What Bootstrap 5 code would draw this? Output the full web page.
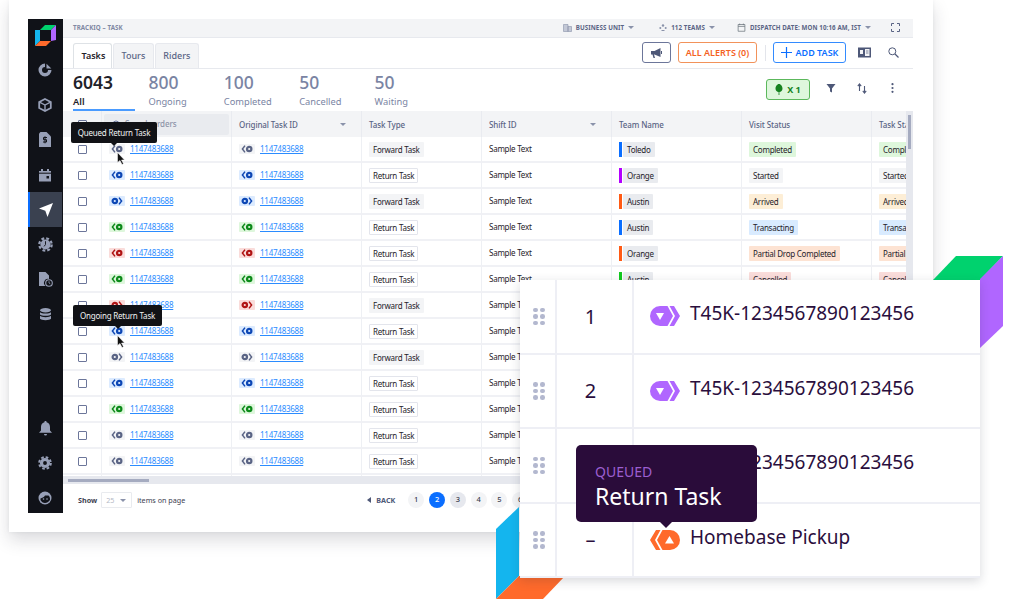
<!DOCTYPE html>
<html lang="en">
<head>
    <meta charset="UTF-8">
    <meta name="viewport" content="width=device-width, initial-scale=1.0">
    <title>TrackIQ - Task</title>
    <link href="https://cdn.jsdelivr.net/npm/bootstrap@5.3.0/dist/css/bootstrap.min.css" rel="stylesheet">
    <style>
        html, body { height: 609px; overflow: hidden; }
        body { background: #fff; font-family: "Noto Sans", sans-serif; color: #1f2229; position: relative; }
        /* app window */
        .app-frame { width: 924px; height: 532px; margin-left: 9px; padding: 19px 20px 19px 19px; background: #fff; box-shadow: 0 8px 16px rgba(40, 44, 60, .17), 0 0 4px rgba(40, 44, 60, .06); }
        .app-inner { height: 494px; }
        .side-rail { width: 35px; background: #101218; color: #979fb6; flex: none; }
        .rail-logo { height: 33px; }
        .rail-item { height: 35px; width: 34px; }
        .rail-item:last-child { margin-bottom: -2.5px; }
        .rail-item.active { background: #3a4150; border-left: 2px solid #0a6eff; color: #fff; }
        .app-main { width: 850px; min-width: 0; }
        .top-strip { height: 19px; background: #f3f4f6; border-bottom: 1px solid #e7e9ee; padding: 0 13px 0 10px; font-size: 6.2px; font-weight: 700; color: #5a6485; letter-spacing: .1px; }
        .crumb { color: #7f88a3; }
        .strip-gap { gap: 22px; }
        .strip-unit { margin-right: 3px; }
        .strip-full { margin-left: -2px; }
        .caret-d { display: inline-block; border-left: 3px solid transparent; border-right: 3px solid transparent; border-top: 3px solid #8a92aa; }
        .tab-row { height: 31px; border-bottom: 1px solid #e7e9ee; padding: 5px 14px 0 10px; }
        .tab-row .nav-tabs { border: 0; gap: 1px; font-size: 9px; }
        .tab-row .nav-link { height: 25px; padding: 5px 7.5px; background: #f3f4f6; color: #5a6485; border: 1px solid #e7e9ee; border-bottom: 0; border-radius: 3px 3px 0 0; font-weight: 500; margin: 0; }
        .tab-row .nav-link.active { background: #fff; color: #1f2229; font-weight: 600; width: 39px; }
        .act-btn { height: 21px; padding: 0 6px; font-size: 9px; font-weight: 600; line-height: 1; border-radius: 3px; background: #fff; --bs-btn-border-width: 1px; margin-top: -1px; }
        .btn-horn { width: 29px; border-color: #6c769a; color: #4e5878; padding: 0; margin-right: 7px; }
        .btn-alert { width: 79px; border-color: #f2925a; color: #f4621f; padding: 0; }
        .btn-add { width: 73px; border-color: #338bff; color: #0a6eff; padding: 0; }
        .act-divider { width: 1px; height: 16px; background: #e3e5eb; margin: 2px 7px 0 8px; }
        .book-ic { margin: 4px 0 0 12px; }
        .find-ic { margin: 4px 0 0 17px; }
        .stat-row { height: 42px; padding: 0 5px 0 10px; }
        .stat-cell { width: 75.4px; padding-top: 1px; color: #7a84a3; }
        .stat-num { font-size: 17.5px; font-weight: 500; line-height: 24px; }
        .stat-label { font-size: 9.3px; line-height: 13px; margin-top: 1px; }
        .stat-cell.active { color: #1f2229; }
        .stat-cell.active .stat-num, .stat-cell.active .stat-label { font-weight: 600; }
        .stat-bar { width: 62px; height: 2px; background: #4a9bff; margin-top: 1px; }
        .stat-tools { padding-top: 10px; }
        .btn-tree { width: 44px; height: 21px; margin-right: 5px; background: #def7dc; border: 1px solid #5cb85c; border-radius: 3px; color: #16821f; font-size: 9px; font-weight: 700; }
        .tool-btn { width: 31px; color: #4e5878; }
        /* table */
        .table-wrap { height: 365px; overflow: hidden; position: relative; }
        .task-table { table-layout: fixed; width: 939px; margin: 0; font-size: 8px; letter-spacing: -.25px; border-collapse: separate; border-spacing: 0; color: #1f2229; }
        .task-table th { height: 26px; background: #f3f4f6; color: #5a6485; font-size: 8px; font-weight: 500; letter-spacing: -.1px; padding: 1px 7px 0; border: 0; border-right: 1px solid #e9ebf0; vertical-align: middle; }
        .task-table td { height: 26px; padding: 0 7px; border: 0; border-right: 1px solid #eef0f4; border-bottom: 2px solid #f0f1f5; vertical-align: middle; white-space: nowrap; overflow: hidden; }
        .task-table .cell-search { padding: 2px; }
        .search-box { height: 21px; background: #e9ebef; border-radius: 2px; padding-left: 8px; color: #8d94a8; gap: 4px; }
        .box-check { width: 9px; height: 9px; border: 1px solid #6c769a; border-radius: 1px; display: block; margin: 0 auto; }
        .type-tag, .team-tag, .stat-tag { display: inline-block; height: 15px; line-height: 15px; padding: 0 4px; border-radius: 1px; }
        .type-forward { background: #f3f4f6; }
        .type-return { background: #fff; outline: 1px solid #e3e5ec; outline-offset: -1px; }
        .team-wrap { display: flex; align-items: center; gap: 1px; }
        .team-bar { width: 3px; height: 15px; }
        .team-tag { background: #e9ebef; }
        .s-green { background: #def7dc; } .s-grey { background: #f3f4f6; } .s-amber { background: #fdeed6; }
        .s-blue { background: #d9ebff; } .s-peach { background: #fde3d3; } .s-red { background: #fadcda; }
        .id-link { color: #2b8cff; text-decoration: underline; margin-left: 5px; }
        .id-badge { display: inline-flex; align-items: center; justify-content: center; width: 16px; height: 10px; border-radius: 1px; vertical-align: -2px; }
        .b-blue { background: #dcebff; color: #0d47b5; } .b-green { background: #def7dc; color: #0d8a1a; }
        .b-red { background: #fadcda; color: #b01414; } .b-grey { background: #f3f4f6; color: #5a6485; }
        .v-scroll { position: absolute; right: 0; top: 0; bottom: 0; width: 7.5px; background: #e6e8ee; }
        .v-thumb { width: 3px; height: 34px; margin: 4px 0 0 2.5px; background: #a5abc0; }
        .h-scroll { height: 8px; background: #e6e8ee; }
        .h-thumb { width: 81px; height: 3px; margin-left: 5px; background: #a5abc0; }
        /* footer */
        .pager-row { height: 29px; padding: 3px 0 0 15px; font-size: 7.2px; color: #3c4150; }
        .size-select { width: 31px; height: 16px; border: 1px solid #e9ebef; border-radius: 1px; margin: 0 5px 0 4px; padding: 0 5px 0 4px; color: #b5b9c6; }
        .back-link { margin-left: 182px; margin-right: 13px; color: #4e5878; font-weight: 700; font-size: 7.2px; gap: 5px; }
        .page-dot { width: 16px; height: 16px; margin-right: 4.8px; border-radius: 50%; background: #f3f4f6; font-size: 7.5px; font-weight: 500; color: #3c4150; }
        .page-dot.on { background: #0a6eff; color: #fff; }
        .page-dot.mid { background: #e6e8ee; }
        /* hover tips */
        .hover-tip { position: absolute; background: #111216; color: #f2f2f2; font-size: 8px; letter-spacing: -.2px; height: 21px; line-height: 21px; border-radius: 2px; text-align: center; z-index: 3; }
        .hover-tip::after { content: ""; position: absolute; left: 50%; bottom: -3px; margin-left: -3px; border-left: 3px solid transparent; border-right: 3px solid transparent; border-top: 3px solid #111216; }
        .tip-one { left: 71px; top: 122px; width: 86px; }
        .tip-two { left: 73px; top: 305px; width: 89px; }
        .cursor-mark { position: absolute; z-index: 4; width: 9px; height: 13px; }
        .cur-one { left: 117px; top: 152px; }
        .cur-two { left: 117px; top: 335px; }
        /* cube pieces + floating panel */
        .cube-art { position: absolute; left: 0; top: 0; z-index: 5; pointer-events: none; }
        .float-panel { position: absolute; left: 520px; top: 280px; width: 460px; background: #fff; z-index: 6; box-shadow: 0 3px 10px rgba(40, 44, 60, .18); color: #2a0e3d; }
        .panel-row { height: 74.5px; border-bottom: 2px solid #eeeff5; }
        .panel-grip { width: 37px; padding-left: 3px; border-right: 2px solid #eeeff5; }
        .grip-dots { display: grid; grid-template-columns: 4.5px 4.5px; gap: 2px 2.5px; }
        .grip-dots i { width: 4.5px; height: 4.5px; border-radius: 50%; background: #b3b8cf; }
        .panel-num { width: 77px; padding: 1px 8px 0 0; border-right: 2px solid #eeeff5; font-size: 20px; }
        .panel-body { padding-left: 16px; font-size: 19px; gap: 10px; }
        .panel-text { padding-bottom: 6px; }
        .dark-tip { position: absolute; left: 576px; top: 445px; width: 181px; height: 77px; background: #2a0c3a; border-radius: 5px; z-index: 7; padding: 17px 19px; color: #fff; }
        .dark-tip::after { content: ""; position: absolute; left: 84px; bottom: -6px; border-left: 6px solid transparent; border-right: 6px solid transparent; border-top: 6px solid #2a0c3a; }
        .dark-kicker { color: #9c5fd0; font-size: 14px; line-height: 19px; }
        .dark-title { font-size: 23px; line-height: 31px; }
    </style>
</head>
<body>
    <svg width="0" height="0" class="position-absolute">
        <symbol id="ic-ret" viewBox="0 0 16 10"><path d="M6 1.600 3.400 5 6 8.400" fill="none" stroke="currentColor" stroke-width="1.500"/><circle cx="10.200" cy="5" r="2.200" fill="none" stroke="currentColor" stroke-width="2.200"/></symbol>
        <symbol id="ic-fwd" viewBox="0 0 16 10"><circle cx="5.800" cy="5" r="2.200" fill="none" stroke="currentColor" stroke-width="2.200"/><path d="M10 1.600 12.600 5 10 8.400" fill="none" stroke="currentColor" stroke-width="1.500"/></symbol>
        <symbol id="ic-gear" viewBox="0 0 16 16"><circle cx="8" cy="8" r="5.400" fill="currentColor"/><circle cx="8" cy="8" r="6.600" fill="none" stroke="currentColor" stroke-width="2.400" stroke-dasharray="3 2.180"/><path d="M8 4.500V8L6.500 10" fill="none" stroke="#101218" stroke-width="1"/></symbol>
        <symbol id="ic-big" viewBox="0 0 30 20"><path d="M10 0h7.500L23 10l-5.500 10H10a10 10 0 0 1 0-20z" fill="currentColor"/><path d="M19.500 0H24l6 10-6 10h-4.500l5.500-10z" fill="currentColor"/></symbol>
        <symbol id="ic-cal" viewBox="0 0 12 12"><path d="M1.500 2h9v9h-9zM1.500 4.500h9M3.500 .8v2M8.500 .8v2" fill="none" stroke="currentColor" stroke-width="1"/></symbol>
    </svg>

    <div class="app-frame">
        <div class="app-inner d-flex">
            <!-- left rail -->
            <div class="side-rail d-flex flex-column">
                <div class="rail-logo d-flex align-items-center justify-content-center">
                    <svg width="21" height="21" viewBox="0 0 21 21"><path d="M5 5 10 0h11l-5 5z" fill="#00d26e"/><path d="M16 5l5-5v15l-5 1z" fill="#b066ff"/><path d="M0 5h5v11l-5 5z" fill="#14b5ee"/><path d="M5 16h11l-5 5H0z" fill="#ff6a2b"/></svg>
                </div>
                <div class="rail-item d-flex align-items-center justify-content-center"><svg width="14" height="14" viewBox="0 0 14 14"><path d="M7 .5a6.500 6.500 0 1 0 6.500 6.500H10a3 3 0 1 1-3-3z" fill="currentColor"/><path d="M8.500 .7 13.300 5.500H8.500z" fill="currentColor"/></svg></div>
                <div class="rail-item d-flex align-items-center justify-content-center"><svg width="14" height="14" viewBox="0 0 14 14"><path d="M7 1 12.800 4v6L7 13 1.200 10V4z" fill="none" stroke="currentColor" stroke-width="1.800"/><path d="M1.500 4.200 7 7l5.500-2.800M7 7v6" fill="none" stroke="currentColor" stroke-width="1.400"/></svg></div>
                <div class="rail-item d-flex align-items-center justify-content-center"><svg width="12" height="15" viewBox="0 0 12 15"><path d="M0 1.500 1.500 0h6L12 4.500V15H0z" fill="currentColor"/><path d="M8 5.500H4.500v2.200h3v2.300H4M6 4.300v7" fill="none" stroke="#101218" stroke-width="1"/></svg></div>
                <div class="rail-item d-flex align-items-center justify-content-center"><svg width="14" height="14" viewBox="0 0 14 14"><path d="M1 3h12v10.500H1z" fill="currentColor"/><path d="M3 1h2v2H3zM9 1h2v2H9z" fill="currentColor"/><path d="M1 5.200h12" stroke="#101218"/><rect x="8.500" y="8" width="2.500" height="2.500" fill="#101218"/></svg></div>
                <div class="rail-item active d-flex align-items-center justify-content-center"><svg width="14" height="14" viewBox="0 0 14 14"><path d="M14 0 8.500 14 6.300 7.700 0 5.500z" fill="currentColor"/></svg></div>
                <div class="rail-item d-flex align-items-center justify-content-center"><svg width="15" height="15"><use href="#ic-gear"/></svg></div>
                <div class="rail-item d-flex align-items-center justify-content-center"><svg width="15" height="15" viewBox="0 0 15 15"><path d="M1 0h6.500L11 3.500V7a4 4 0 0 0-3.500 7H1z" fill="currentColor"/><circle cx="11" cy="11" r="3.300" fill="none" stroke="currentColor" stroke-width="1.100"/><path d="M11 9.200V11l1.300.8" fill="none" stroke="currentColor" stroke-width=".8"/></svg></div>
                <div class="rail-item d-flex align-items-center justify-content-center"><svg width="13" height="13" viewBox="0 0 13 13"><ellipse cx="6.500" cy="2.200" rx="5.500" ry="2.200" fill="currentColor"/><path d="M1 4.200c1 1.800 10 1.800 11 0v2.300c-1 1.800-10 1.800-11 0zM1 7.800c1 1.800 10 1.800 11 0v2.900c-1 1.900-10 1.900-11 0z" fill="currentColor"/></svg></div>
                <div class="flex-grow-1"></div>
                <div class="rail-item d-flex align-items-center justify-content-center"><svg width="13" height="15" viewBox="0 0 13 15"><path d="M6.500 0c.8 0 1.100.5 1.100 1.200C10 1.800 11 3.700 11 6v3.500l2 2.300H0l2-2.300V6c0-2.300 1-4.200 3.400-4.800C5.400.5 5.700 0 6.500 0zM5 13h3a1.500 1.500 0 0 1-3 0z" fill="currentColor"/></svg></div>
                <div class="rail-item d-flex align-items-center justify-content-center"><svg width="14" height="14" viewBox="0 0 16 16"><path d="M8 4a4 4 0 1 0 0 8 4 4 0 0 0 0-8z" fill="none" stroke="currentColor" stroke-width="3.600"/><circle cx="8" cy="8" r="6.600" fill="none" stroke="currentColor" stroke-width="2.400" stroke-dasharray="3 2.180"/></svg></div>
                <div class="rail-item d-flex align-items-center justify-content-center"><svg width="14" height="14" viewBox="0 0 14 14"><circle cx="7" cy="7" r="6.500" fill="currentColor"/><path d="M2.500 9V7.500C4 7 6 6.500 7 4.500h3.500c1 .8 1.500 2 1.500 3.500v1c-1.500 2-3 3-5 3s-3.500-1-4.500-3z" fill="#101218"/><circle cx="5.500" cy="8" r=".8" fill="currentColor"/><circle cx="9" cy="8" r=".8" fill="currentColor"/></svg></div>
            </div>

            <!-- main column -->
            <div class="app-main d-flex flex-column">
                <div class="top-strip d-flex align-items-center justify-content-between">
                    <span class="crumb">TRACKIQ – TASK</span>
                    <div class="d-flex align-items-center strip-gap">
                        <span class="strip-unit d-flex align-items-center gap-1"><svg width="9" height="8" viewBox="0 0 9 8"><path d="M.5.500h4.500v7H.5zM5 2.500h3.500v5H5z" fill="#c3c8d6" stroke="#8a92aa" stroke-width=".6"/></svg>BUSINESS UNIT <i class="caret-d"></i></span>
                        <span class="d-flex align-items-center gap-1"><svg width="8" height="7" viewBox="0 0 8 7"><circle cx="4" cy="1.500" r="1.200" fill="#8a92aa"/><circle cx="1.300" cy="4" r="1" fill="#8a92aa"/><circle cx="6.700" cy="4" r="1" fill="#8a92aa"/><path d="M2.500 6.500h3" stroke="#8a92aa"/></svg>112 TEAMS <i class="caret-d"></i></span>
                        <span class="d-flex align-items-center gap-1"><svg width="9" height="9" class="text-secondary"><use href="#ic-cal"/></svg>DISPATCH DATE: MON 10:16 AM, IST <i class="caret-d"></i></span>
                        <svg class="strip-full" width="9" height="9" viewBox="0 0 9 9"><path d="M.5 3V.5H3M6 .5h2.500V3M8.500 6v2.500H6M3 8.500H.5V6" fill="none" stroke="#5a6485" stroke-width="1"/></svg>
                    </div>
                </div>

                <div class="tab-row d-flex justify-content-between">
                    <ul class="nav nav-tabs">
                        <li class="nav-item"><a class="nav-link active" href="#">Tasks</a></li>
                        <li class="nav-item"><a class="nav-link" href="#">Tours</a></li>
                        <li class="nav-item"><a class="nav-link" href="#">Riders</a></li>
                    </ul>
                    <div class="d-flex align-items-start">
                        <button class="btn act-btn btn-horn d-flex align-items-center justify-content-center"><svg width="11" height="10" viewBox="0 0 11 10"><path d="M0 3h3.500L9.500 0v9L3.500 6.500H3L4 10H2.500L1.500 6.500H0z" fill="currentColor"/><rect x="10" y="3" width="1" height="3" fill="currentColor"/></svg></button>
                        <button class="btn act-btn btn-alert">ALL ALERTS (0)</button>
                        <span class="act-divider"></span>
                        <button class="btn act-btn btn-add d-flex align-items-center justify-content-center gap-1"><svg width="11" height="11" viewBox="0 0 11 11"><path d="M5.500 0v11M0 5.500h11" stroke="currentColor" stroke-width="1.200"/></svg>ADD TASK</button>
                        <svg class="book-ic" width="13" height="11" viewBox="0 0 13 11"><rect width="13" height="10" y=".5" fill="#4e5878"/><rect x="7" y="2" width="4.500" height="7" fill="#f3f4f6"/><path d="M8 4h2.500M8 6h2.500" stroke="#4e5878" stroke-width=".7"/><rect x="2" y="3" width="3" height="4" fill="#f3f4f6"/></svg>
                        <svg class="find-ic" width="11" height="11" viewBox="0 0 11 11"><circle cx="4.300" cy="4.300" r="3.500" fill="none" stroke="#4e5878" stroke-width="1"/><path d="M7 7l3.500 3.500" stroke="#4e5878" stroke-width="1.300"/></svg>
                    </div>
                </div>

                <div class="stat-row d-flex justify-content-between">
                    <div class="d-flex">
                        <div class="stat-cell active"><div class="stat-num">6043</div><div class="stat-label">All</div><div class="stat-bar"></div></div>
                        <div class="stat-cell"><div class="stat-num">800</div><div class="stat-label">Ongoing</div></div>
                        <div class="stat-cell"><div class="stat-num">100</div><div class="stat-label">Completed</div></div>
                        <div class="stat-cell"><div class="stat-num">50</div><div class="stat-label">Cancelled</div></div>
                        <div class="stat-cell"><div class="stat-num">50</div><div class="stat-label">Waiting</div></div>
                    </div>
                    <div class="stat-tools d-flex align-items-start">
                        <div class="btn-tree d-flex align-items-center justify-content-center gap-1"><svg width="8" height="11" viewBox="0 0 8 11"><path d="M4 0c2 0 3.500 2.500 3.500 4.500S6 8 4.400 8v3h-.8V8C2 8 .5 6.500.5 4.500S2 0 4 0z" fill="#16821f"/></svg>X 1</div>
                        <div class="tool-btn d-flex justify-content-center pt-1"><svg width="10" height="10" viewBox="0 0 10 10"><path d="M.5 1h9L6 5.500V9.500L4 8.500V5.500z" fill="currentColor"/></svg></div>
                        <div class="tool-btn d-flex justify-content-center pt-1"><svg width="10" height="11" viewBox="0 0 10 11"><path d="M2.500 8V2M.8 3.200 2.500 1l1.700 2.200M7.500 3v6M5.800 7.800 7.500 10l1.700-2.200" fill="none" stroke="currentColor" stroke-width="1.100"/></svg></div>
                        <div class="tool-btn d-flex justify-content-center pt-1"><svg width="3" height="10" viewBox="0 0 3 10"><circle cx="1.500" cy="1.200" r="1.100" fill="currentColor"/><circle cx="1.500" cy="5" r="1.100" fill="currentColor"/><circle cx="1.500" cy="8.800" r="1.100" fill="currentColor"/></svg></div>
                    </div>
                </div>

                <div class="table-wrap">
                    <table class="table task-table">
                        <colgroup><col style="width:39px"><col style="width:130px"><col style="width:130px"><col style="width:120px"><col style="width:130px"><col style="width:130px"><col style="width:130px"><col style="width:130px"></colgroup>
                        <thead>
                            <tr>
                                <th><span class="box-check"></span></th>
                                <th class="cell-search"><div class="search-box d-flex align-items-center"><svg width="9" height="9" viewBox="0 0 9 9"><circle cx="4" cy="4" r="3" fill="none" stroke="#6c769a"/><path d="M6 6l2.500 2.500" stroke="#6c769a"/></svg>Search orders</div></th>
                                <th><div class="d-flex align-items-center justify-content-between"><span>Original Task ID</span><i class="caret-d me-2"></i></div></th>
                                <th>Task Type</th>
                                <th><div class="d-flex align-items-center justify-content-between"><span>Shift ID</span><i class="caret-d me-2"></i></div></th>
                                <th>Team Name</th>
                                <th>Visit Status</th>
                                <th>Task Status</th>
                            </tr>
                        </thead>
                        <tbody id="taskRows"></tbody>
                    </table>
                    <div class="v-scroll"><div class="v-thumb"></div></div>
                </div>
                <div class="h-scroll d-flex align-items-center"><div class="h-thumb"></div></div>

                <div class="pager-row d-flex align-items-center">
                    <b>Show</b>
                    <span class="size-select d-flex align-items-center justify-content-between">25 <i class="caret-d"></i></span>
                    <span>items on page</span>
                    <span class="back-link d-flex align-items-center"><svg width="4" height="6" viewBox="0 0 4 6"><path d="M4 0v6L0 3z" fill="currentColor"/></svg>BACK</span>
                    <span class="page-dot d-flex align-items-center justify-content-center">1</span>
                    <span class="page-dot on d-flex align-items-center justify-content-center">2</span>
                    <span class="page-dot mid d-flex align-items-center justify-content-center">3</span>
                    <span class="page-dot d-flex align-items-center justify-content-center">4</span>
                    <span class="page-dot d-flex align-items-center justify-content-center">5</span>
                    <span class="page-dot d-flex align-items-center justify-content-center">6</span>
                </div>
            </div>
        </div>
    </div>

    <!-- hover tooltips over the table -->
    <div class="hover-tip tip-one">Queued Return Task</div>
    <div class="hover-tip tip-two">Ongoing Return Task</div>
    <svg class="cursor-mark cur-one" viewBox="0 0 9 13"><path d="M.5.500v10l2.500-2 2 4 1.500-.8-2-3.700h3z" fill="#111" stroke="#fff" stroke-width=".5"/></svg>
    <svg class="cursor-mark cur-two" viewBox="0 0 9 13"><path d="M.5.500v10l2.500-2 2 4 1.500-.8-2-3.700h3z" fill="#111" stroke="#fff" stroke-width=".5"/></svg>

    <!-- cube pieces behind the floating panel -->
    <svg class="cube-art" width="1011" height="609" viewBox="0 0 1011 609">
        <path d="M933 280 956 256H1003L980 280z" fill="#00d26e"/>
        <path d="M980 279 1003 256V326L980 348z" fill="#b066ff"/>
        <path d="M496 529 519 507V576L496 599z" fill="#14b5ee"/>
        <path d="M519 576H565L543 599H496z" fill="#ff6a2b"/>
    </svg>

    <div class="float-panel" id="floatPanel"></div>

    <div class="dark-tip">
        <div class="dark-kicker">QUEUED</div>
        <div class="dark-title">Return Task</div>
    </div>

    <script>
        const rows = [
            ['ret', 'grey', 'Forward Task', 'Toledo', '#0a6eff', 'Completed', 's-green'],
            ['ret', 'blue', 'Return Task', 'Orange', '#b400ff', 'Started', 's-grey'],
            ['fwd', 'blue', 'Forward Task', 'Austin', '#ff5a14', 'Arrived', 's-amber'],
            ['ret', 'green', 'Return Task', 'Austin', '#0a6eff', 'Transacting', 's-blue'],
            ['ret', 'red', 'Return Task', 'Orange', '#ff5a14', 'Partial Drop Completed', 's-peach'],
            ['ret', 'green', 'Return Task', 'Austin', '#12c91f', 'Cancelled', 's-red'],
            ['fwd', 'red', 'Forward Task', 'Toledo', '#0a6eff', 'Completed', 's-green'],
            ['ret', 'blue', 'Return Task', 'Orange', '#b400ff', 'Started', 's-grey'],
            ['fwd', 'grey', 'Forward Task', 'Austin', '#ff5a14', 'Arrived', 's-amber'],
            ['ret', 'blue', 'Return Task', 'Austin', '#0a6eff', 'Transacting', 's-blue'],
            ['ret', 'green', 'Return Task', 'Orange', '#ff5a14', 'Completed', 's-green'],
            ['ret', 'grey', 'Return Task', 'Austin', '#12c91f', 'Started', 's-grey'],
            ['ret', 'grey', 'Return Task', 'Toledo', '#0a6eff', 'Arrived', 's-amber'],
            ['ret', 'blue', 'Return Task', 'Toledo', '#0a6eff', 'Arrived', 's-amber']
        ];

        // Task id cell, used for both id columns
        function idCell(r) {
            return `<span class="id-badge b-${r[1]}"><svg width="16" height="10"><use href="#ic-${r[0]}"/></svg></span><a class="id-link" href="#">1147483688</a>`;
        }

        document.getElementById('taskRows').innerHTML = rows.map(r => `
            <tr>
                <td><span class="box-check"></span></td>
                <td>${idCell(r)}</td>
                <td>${idCell(r)}</td>
                <td><span class="type-tag ${r[2] === 'Return Task' ? 'type-return' : 'type-forward'}">${r[2]}</span></td>
                <td>Sample Text</td>
                <td><div class="team-wrap"><span class="team-bar" style="background:${r[4]}"></span><span class="team-tag">${r[3]}</span></div></td>
                <td><span class="stat-tag ${r[6]}">${r[5]}</span></td>
                <td><span class="stat-tag ${r[6]}">${r[5]}</span></td>
            </tr>`).join('');

        const panelRows = [
            ['1', 'T45K-1234567890123456', '#b066ff', false],
            ['2', 'T45K-1234567890123456', '#b066ff', false],
            ['3', 'T45K-1234567890123456', '#b066ff', false],
            ['–', 'Homebase Pickup', '#ff6a2b', true]
        ];

        document.getElementById('floatPanel').innerHTML = panelRows.map(p => `
            <div class="panel-row d-flex">
                <div class="panel-grip d-flex align-items-center justify-content-center"><div class="grip-dots"><i></i><i></i><i></i><i></i><i></i><i></i></div></div>
                <div class="panel-num d-flex align-items-center justify-content-center">${p[0]}</div>
                <div class="panel-body d-flex align-items-center flex-grow-1">
                    <svg width="30" height="20" viewBox="0 0 30 20" style="color:${p[2]}">
                        <g transform="${p[3] ? 'translate(30,0) scale(-1,1)' : ''}"><use href="#ic-big"/></g>
                        <path d="${p[3] ? 'M19.500 6 24 13.500H15z' : 'M6 7h8l-4 7z'}" fill="#fff"/>
                    </svg>
                    <span class="panel-text">${p[1]}</span>
                </div>
            </div>`).join('');
    </script>

    <script src="https://cdn.jsdelivr.net/npm/bootstrap@5.3.0/dist/js/bootstrap.bundle.min.js"></script>
</body>
</html>
